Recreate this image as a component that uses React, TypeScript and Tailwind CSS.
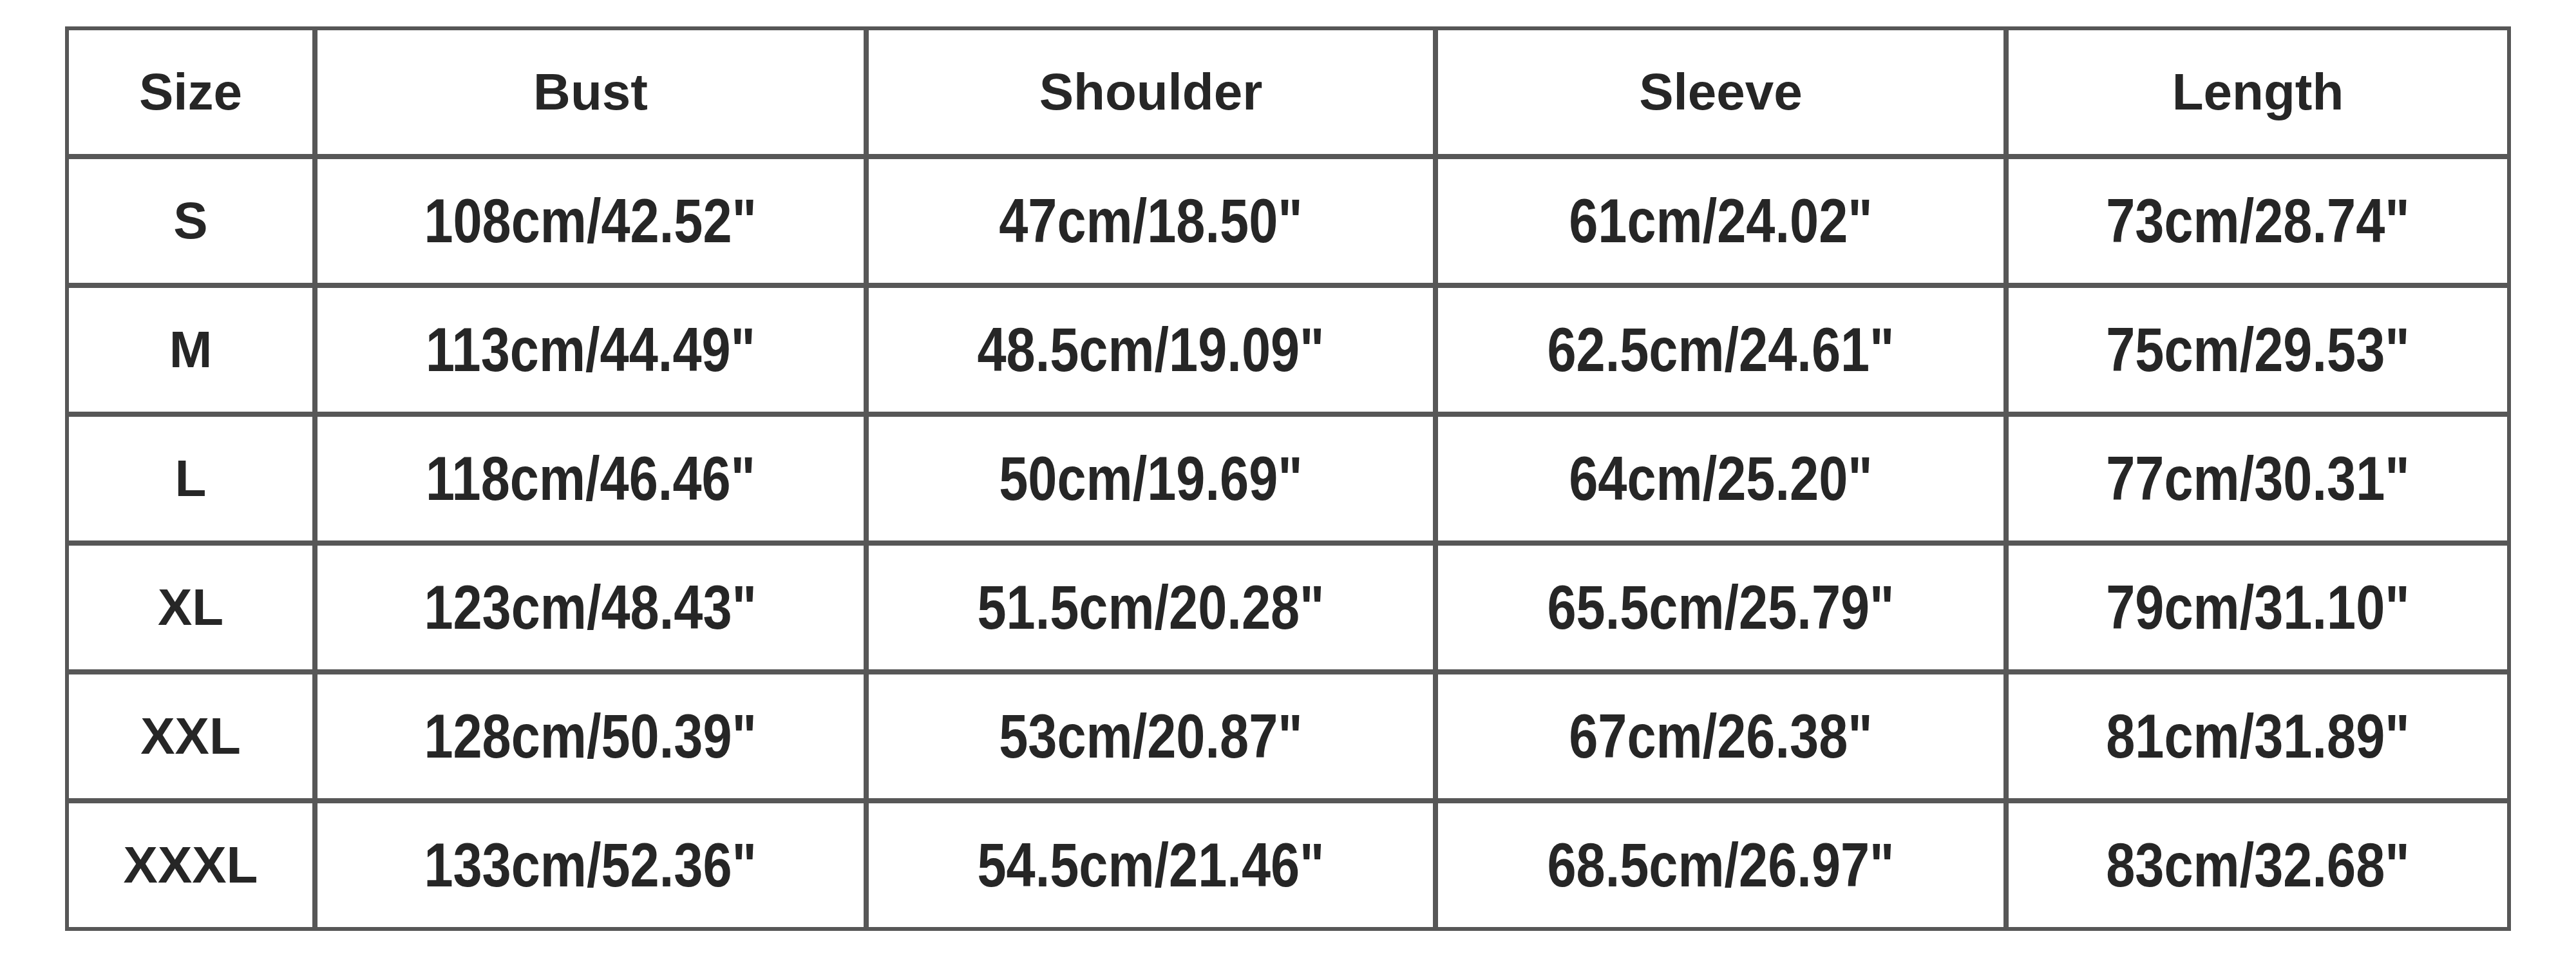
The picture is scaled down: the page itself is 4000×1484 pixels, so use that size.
const headers = ["Size", "Bust", "Shoulder", "Sleeve", "Length"];

const rows = [
  ["S", "108cm/42.52''", "47cm/18.50''", "61cm/24.02''", "73cm/28.74''"],
  ["M", "113cm/44.49''", "48.5cm/19.09''", "62.5cm/24.61''", "75cm/29.53''"],
  ["L", "118cm/46.46''", "50cm/19.69''", "64cm/25.20''", "77cm/30.31''"],
  ["XL", "123cm/48.43''", "51.5cm/20.28''", "65.5cm/25.79''", "79cm/31.10''"],
  ["XXL", "128cm/50.39''", "53cm/20.87''", "67cm/26.38''", "81cm/31.89''"],
  ["XXXL", "133cm/52.36''", "54.5cm/21.46''", "68.5cm/26.97''", "83cm/32.68''"],
];

function Cell({ children, narrow }: { children: React.ReactNode; narrow?: boolean }) {
  return (
    <div className="flex items-center justify-center bg-white">
      {narrow ? (
        // narrow face isn't installed, so squeeze the regular bold
        <span className="inline-block scale-x-[0.845] font-['Liberation_Sans',Arial,sans-serif] text-[96px] leading-none font-bold whitespace-nowrap text-[#262626]">
          {children}
        </span>
      ) : (
        <span className="font-['Liberation_Sans',Arial,sans-serif] text-[80px] leading-none font-bold text-[#262626]">
          {children}
        </span>
      )}
    </div>
  );
}

export default function App() {
  return (
    <div className="min-h-screen bg-white pl-[101px] pt-[41px]">
      <div className="grid w-[3798px] grid-cols-[378px_848px_876px_878px_774px] grid-rows-[repeat(7,192px)] gap-[8px] border-[6px] border-[#575757] bg-[#575757]">
        {headers.map((h) => (
          <Cell key={h}>{h}</Cell>
        ))}
        {rows.map((r) =>
          r.map((v, i) => (
            <Cell key={r[0] + i} narrow={i > 0}>
              {v.replace(/''/g, '"')}
            </Cell>
          ))
        )}
      </div>
    </div>
  );
}
